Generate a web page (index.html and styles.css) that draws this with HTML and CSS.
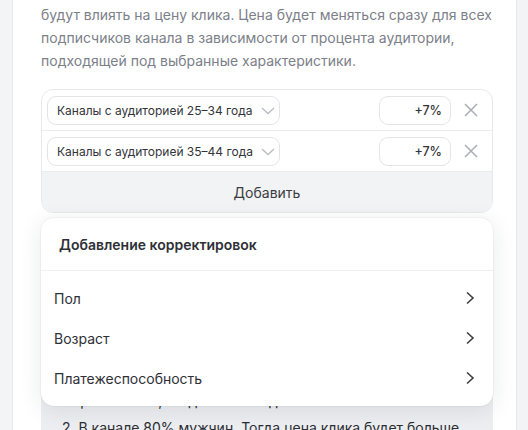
FILE: index.html
```html
<!DOCTYPE html>
<html lang="ru">
<head>
<meta charset="utf-8">
<link rel="stylesheet" href="styles.css">
</head>
<body>
<div class="card">
  <p class="intro">будут влиять на цену клика. Цена будет меняться сразу для всех подписчиков канала в зависимости от процента аудитории, подходящей под выбранные характеристики.</p>

  <div class="adjust">
    <div class="row">
      <div class="select">
        <span>Каналы с аудиторией 25–34 года</span>
        <svg class="caret" width="14" height="8" viewBox="0 0 14 8"><path d="M1 1l6 5.5L13 1" fill="none" stroke="#b8bcc4" stroke-width="1.3"/></svg>
      </div>
      <div class="pct">+7%</div>
      <svg class="close" width="16" height="16" viewBox="0 0 16 16"><path d="M2 2l12 12M14 2L2 14" stroke="#a9adb5" stroke-width="1.5"/></svg>
    </div>
    <div class="row">
      <div class="select">
        <span>Каналы с аудиторией 35–44 года</span>
        <svg class="caret" width="14" height="8" viewBox="0 0 14 8"><path d="M1 1l6 5.5L13 1" fill="none" stroke="#b8bcc4" stroke-width="1.3"/></svg>
      </div>
      <div class="pct">+7%</div>
      <svg class="close" width="16" height="16" viewBox="0 0 16 16"><path d="M2 2l12 12M14 2L2 14" stroke="#a9adb5" stroke-width="1.5"/></svg>
    </div>
    <div class="add">Добавить</div>
  </div>

  <div class="examples">
    <div class="popup">
      <div class="popup-head">Добавление корректировок</div>
      <ul class="menu">
        <li><span>Пол</span><svg width="10" height="14" viewBox="0 0 10 14"><path d="M2 1.5L8 7l-6 5.5" fill="none" stroke="#3b3d42" stroke-width="1.6"/></svg></li>
        <li><span>Возраст</span><svg width="10" height="14" viewBox="0 0 10 14"><path d="M2 1.5L8 7l-6 5.5" fill="none" stroke="#3b3d42" stroke-width="1.6"/></svg></li>
        <li><span>Платежеспособность</span><svg width="10" height="14" viewBox="0 0 10 14"><path d="M2 1.5L8 7l-6 5.5" fill="none" stroke="#3b3d42" stroke-width="1.6"/></svg></li>
      </ul>
    </div>
    <p class="ex">1. В канале 60% аудитории 25–34 года. Цена клика вырастет на 4,2% для всех подписчиков.</p>
    <p class="ex ex-next">2. В канале 80% мужчин. Тогда цена клика будет больше.</p>
  </div>
</div>
</body>
</html>
```
FILE: styles.css
```css
* { box-sizing: border-box; }
html, body { margin: 0; padding: 0; }
body {
  background: #f3f4f6;
  font-family: Inter, "Noto Sans", sans-serif;
  color: #2b2d33;
  height: 430px;
  overflow: hidden;
}
.card {
  margin-left: 12px;
  width: 505px;
  min-height: 430px;
  background: #fff;
  border-left: 1px solid #e7e8eb;
  border-right: 1px solid #e7e8eb;
  padding: 3px 23px 0 28px;
}
.intro {
  margin: 0;
  font-size: 14px;
  line-height: 23px;
  color: #7c8089;
}
.adjust {
  margin-top: 17px;
  border: 1px solid #e8e9ec;
  border-radius: 12px;
  overflow: hidden;
}
.row {
  height: 41px;
  display: flex;
  align-items: center;
  padding: 0 13px 0 5px;
  border-bottom: 1px solid #ebecef;
}
.select {
  width: 233px;
  height: 29px;
  border: 1px solid #e3e4e8;
  border-radius: 9px;
  display: flex;
  align-items: center;
  gap: 8px;
  padding: 0 8px 0 9px;
  font-size: 12px;
  white-space: nowrap;
  color: #33353a;
}
.caret { flex: none; margin-top: 1px; }
.pct {
  margin-left: auto;
  width: 72px;
  height: 29px;
  border: 1px solid #e3e4e8;
  border-radius: 9px;
  display: flex;
  align-items: center;
  justify-content: flex-end;
  padding-right: 8px;
  font-size: 12.5px;
  font-weight: 500;
  color: #33353a;
}
.close { margin-left: 12px; flex: none; }
.add {
  height: 40px;
  background: #f2f3f5;
  display: flex;
  align-items: center;
  justify-content: center;
  font-size: 14px;
  color: #3a3c42;
}
.examples {
  position: relative;
  margin-top: 10px;
  background: #eceef1;
  border-radius: 12px;
  padding: 143px 16px 14px 21px;
  min-height: 260px;
}
.ex {
  margin: 0;
  font-size: 14px;
  line-height: 23px;
  color: #2b2d33;
}
.ex-next { margin-top: 4px; }
.popup {
  position: absolute;
  left: 0;
  right: 0;
  top: -5px;
  height: 188px;
  background: #fff;
  border-radius: 13px;
  box-shadow: 0 4px 22px rgba(30, 35, 50, 0.10), 0 0 0 1px rgba(0,0,0,0.03);
  z-index: 2;
}
.popup-head {
  height: 53px;
  display: flex;
  align-items: center;
  padding-left: 18px;
  font-size: 14px;
  font-weight: 600;
  color: #2e3036;
  border-bottom: 1px solid #eef0f2;
}
.menu {
  list-style: none;
  margin: 0;
  padding: 7px 0 0;
}
.menu li {
  height: 40px;
  display: flex;
  align-items: center;
  justify-content: space-between;
  padding: 0 18px 0 13px;
  font-size: 14px;
  color: #2e3036;
}
```
